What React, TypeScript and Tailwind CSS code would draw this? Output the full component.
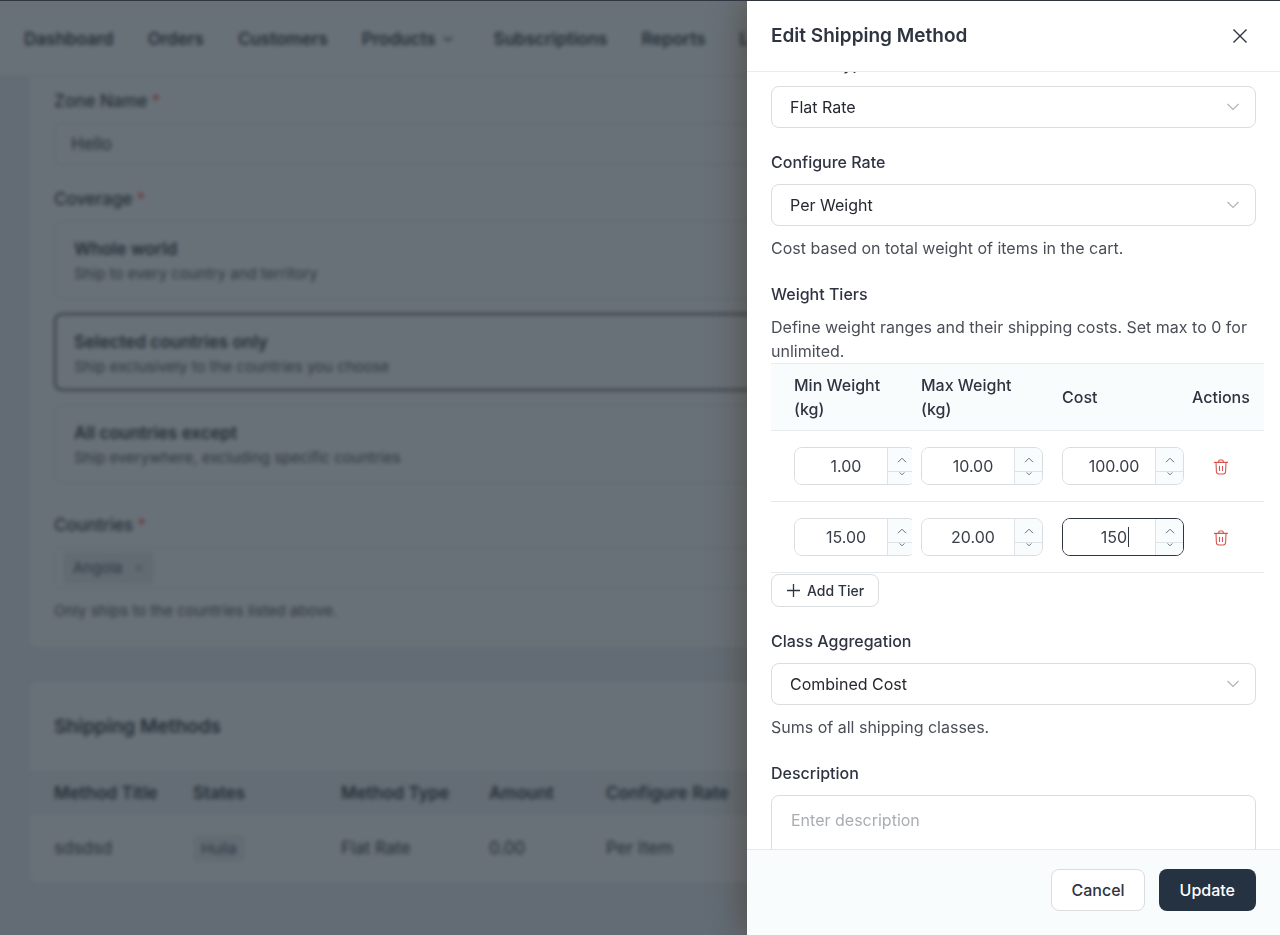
import { useEffect, useRef, useState } from 'react';
import { ChevronDown, X } from 'lucide-react';

type Tier = { id: number; min: string; max: string; cost: string };

const NAV = ['Dashboard', 'Orders', 'Customers', 'Products', 'Subscriptions', 'Reports', 'Logs'];

const COVERAGE = [
  { id: 'world', title: 'Whole world', note: 'Ship to every country and territory' },
  { id: 'selected', title: 'Selected countries only', note: 'Ship exclusively to the countries you choose' },
  { id: 'except', title: 'All countries except', note: 'Ship everywhere, excluding specific countries' },
];

const INITIAL_TIERS: Tier[] = [
  { id: 1, min: '1.00', max: '10.00', cost: '100.00' },
  { id: 2, min: '15.00', max: '20.00', cost: '150' },
];

function Required() {
  return <span className="ml-1 text-[#f04438]">*</span>;
}

function TrashIcon() {
  return (
    <svg width="16" height="16" viewBox="0 0 16 16" fill="none" stroke="currentColor" strokeWidth="1.1" strokeLinecap="round" strokeLinejoin="round">
      <path d="M1.5 3.4h13" />
      <path d="M5.7 3.2V2.3Q5.7 1 7 1h2Q10.3 1 10.3 2.3v.9" />
      <path d="M3 3.6l.4 9Q3.5 15 5.9 15h4.2Q12.5 15 12.6 12.6l.4-9" />
      <path d="M6.5 7.3v4.2M9.5 7.3v4.2" />
    </svg>
  );
}

/* Number box with the up / down steps on its right side */
function NumberField({ label, value, focused, onChange }: {
  label: string;
  value: string;
  focused?: boolean;
  onChange: (v: string) => void;
}) {
  const step = (by: number) => onChange((Number(value) + by).toFixed(2));

  return (
    <div className={`relative flex h-[38px] w-[122px] overflow-hidden rounded-lg border ${focused ? 'border-[#2f3441]' : 'border-[#d9dde0]'}`}>
      <input
        aria-label={label}
        value={value}
        onChange={e => onChange(e.target.value)}
        className="min-w-0 flex-1 bg-white pl-[10px] text-center text-base text-[#3a3e48] caret-transparent outline-none"
      />
      {focused && <span className="absolute top-2 left-[65px] h-5 w-px bg-[#2f3441]" />}
      <div className="flex w-7 flex-col border-l border-[#dfe3e6] bg-[#f8fcfd] text-[#6b7280]">
        <button type="button" aria-label={`Increase ${label}`} onClick={() => step(1)}
                className="flex h-6 items-center justify-center border-b border-[#dfe3e6]">
          <svg width="10" height="6" viewBox="0 0 10 6" fill="none" stroke="currentColor"><path d="M1 5.2 5 1.2l4 4" /></svg>
        </button>
        <button type="button" aria-label={`Decrease ${label}`} onClick={() => step(-1)}
                className="flex flex-1 items-start justify-center">
          <svg width="6" height="4" viewBox="0 0 6 4" fill="none" stroke="currentColor"><path d="M.6.4 3 2.8 5.4.4" /></svg>
        </button>
      </div>
    </div>
  );
}

function SelectField({ id, label, options, help }: { id: string; label: string; options: string[]; help?: string }) {
  return (
    <div>
      <label htmlFor={id} className="block font-medium">{label}</label>
      <div className="relative mt-[10px]">
        <select id={id} className="h-[42px] w-full appearance-none rounded-lg border border-[#d9dde0] bg-white px-[18px] text-base text-[#25282f]">
          {options.map(o => <option key={o}>{o}</option>)}
        </select>
        <svg className="pointer-events-none absolute top-[17px] right-4 text-[#b0b4b9]" width="14" height="8" viewBox="0 0 14 8" fill="none" stroke="currentColor" strokeWidth="1.2">
          <path d="M1.5 1 7 6.5 12.5 1" />
        </svg>
      </div>
      {help && <p className="mt-[10px] text-[#4a4e57]">{help}</p>}
    </div>
  );
}

/* Zone settings page that stays behind the drawer */
function ZonePage() {
  return (
    <div className="min-h-full bg-[#eaeef0] text-[17px] leading-6 text-[#131b26]">
      <nav className="flex h-[76px] items-center gap-[34px] border-b border-[#d9dde0] bg-white px-6 font-semibold">
        {NAV.map(item => (
          <a key={item} href="#" className="flex items-center gap-1 whitespace-nowrap">
            {item}
            {item === 'Products' && <ChevronDown size={16} className="mr-1" />}
          </a>
        ))}
      </nav>

      <main className="flex flex-col gap-[35px] px-[30px]">
        <section className="rounded-b-lg bg-white px-6 pt-3 pb-6">
          <label htmlFor="zone" className="block font-medium">Zone Name<Required /></label>
          <input id="zone" defaultValue="Hello" className="mt-[10px] h-[42px] w-full rounded-lg border border-[#ccd1d5] px-4" />

          <fieldset className="mt-[22px]">
            <legend className="font-medium">Coverage<Required /></legend>
            <div className="mt-[10px] flex flex-col gap-[14px]">
              {COVERAGE.map(c => (
                <label key={c.id}
                       className={`block h-[78px] rounded-lg pt-[14px] ${c.id === 'selected' ? 'border-2 border-[#3e423c] px-[18px]' : 'border border-[#d3d8db] px-[19px]'}`}>
                  <input type="radio" name="coverage" defaultChecked={c.id === 'selected'} className="sr-only" />
                  <span className="block leading-[26px] font-semibold">{c.title}</span>
                  <span className="block text-[15px] leading-6 text-[#363b45]">{c.note}</span>
                </label>
              ))}
            </div>
          </fieldset>

          <div className="mt-[30px] font-medium">Countries<Required /></div>
          <div className="mt-[10px] flex h-[42px] items-center rounded-lg border border-[#d3d8db] px-2">
            <span className="flex h-8 items-center gap-3 rounded bg-[#e6eaec] px-[10px] text-[15px] text-[#363b45]">
              Angola
              <button type="button" aria-label="Remove Angola"><X size={10} /></button>
            </span>
          </div>
          <p className="mt-[10px] text-[15px] leading-6 text-[#363b45]">Only ships to the countries listed above.</p>
        </section>

        <section className="overflow-hidden rounded-lg bg-white">
          <h2 className="px-6 py-[30px] text-[19px] leading-[29px] font-semibold">Shipping Methods</h2>
          <table className="w-full table-fixed text-left">
            <thead className="border-y border-[#dfe3e6] bg-[#eef1f3]">
              <tr className="h-[43px] [&>th]:font-semibold">
                <th className="w-[163px] pl-6">Method Title</th>
                <th className="w-[148px]">States</th>
                <th className="w-[148px]">Method Type</th>
                <th className="w-[117px]">Amount</th>
                <th>Configure Rate</th>
              </tr>
            </thead>
            <tbody>
              <tr className="h-[67px]">
                <td className="pl-6">sdsdsd</td>
                <td><span className="rounded bg-[#e9ecee] px-2 py-1 text-[15px] text-[#363b45]">Huíla</span></td>
                <td>Flat Rate</td>
                <td>0.00</td>
                <td>Per Item</td>
              </tr>
            </tbody>
          </table>
        </section>
      </main>
    </div>
  );
}

export default function App() {
  const [tiers, setTiers] = useState<Tier[]>(INITIAL_TIERS);
  const bodyRef = useRef<HTMLDivElement>(null);

  // Form opens scrolled down to the rate settings
  useEffect(() => {
    if (bodyRef.current) bodyRef.current.scrollTop = 44;
  }, []);

  const update = (id: number, key: keyof Tier, value: string) =>
    setTiers(list => list.map(t => (t.id === id ? { ...t, [key]: value } : t)));

  const addTier = () =>
    setTiers(list => [...list, { id: Date.now(), min: '0.00', max: '0.00', cost: '0.00' }]);

  return (
    <div className="relative h-screen overflow-hidden border-t border-[#2f3440] font-['Inter',sans-serif] text-base">
      <ZonePage />

      <div className="absolute inset-0 bg-[#29343f]/70 backdrop-blur-[2px]" />

      <aside role="dialog" aria-label="Edit Shipping Method"
             className="absolute inset-y-0 right-0 flex w-full max-w-[533px] flex-col bg-white text-[#2f3441] shadow-[-4px_0_32px_rgba(50,30,10,0.4)]">
        <header className="flex h-[71px] shrink-0 items-center justify-between border-b border-[#eaecee] px-6">
          <h2 className="text-[19px] font-semibold">Edit Shipping Method</h2>
          <button type="button" aria-label="Close" className="mr-1 p-1">
            <svg width="16" height="16" viewBox="0 0 16 16" fill="none" stroke="currentColor" strokeWidth="1.4"><path d="M1.5 1.5l13 13M14.5 1.5l-13 13" /></svg>
          </button>
        </header>

        <div ref={bodyRef} className="flex flex-1 flex-col gap-[22px] overflow-y-auto px-6 py-6 [scrollbar-width:none]">
          <SelectField id="type" label="Method Type" options={['Flat Rate', 'Free Shipping', 'Local Pickup']} />
          <SelectField id="rate" label="Configure Rate" options={['Per Weight', 'Per Item', 'Per Order']}
                       help="Cost based on total weight of items in the cart." />

          <div className="-mr-2">
            <h3 className="font-medium">Weight Tiers</h3>
            <p className="mt-[9px] text-[#4a4e57]">
              Define weight ranges and their shipping costs. Set max to 0 for unlimited.
            </p>
            <table className="w-full table-fixed text-left">
              <thead className="border-y border-[#e6edef] bg-[#f8fcfd]">
                <tr className="[&>th]:py-[9px] [&>th]:font-medium">
                  <th className="w-[141px] pr-6 pl-[23px]">Min Weight (kg)</th>
                  <th className="w-[141px] pr-6 pl-[9px]">Max Weight (kg)</th>
                  <th className="w-[139px] pl-[9px]">Cost</th>
                  <th className="whitespace-nowrap">Actions</th>
                </tr>
              </thead>
              <tbody>
                {tiers.map(t => (
                  <tr key={t.id} className="border-b border-[#e6e9eb] [&>td]:py-4">
                    <td className="overflow-hidden pl-[23px]">
                      <NumberField label="Min weight" value={t.min} onChange={v => update(t.id, 'min', v)} />
                    </td>
                    <td className="pl-[9px]">
                      <NumberField label="Max weight" value={t.max} onChange={v => update(t.id, 'max', v)} />
                    </td>
                    <td className="pl-[9px]">
                      <NumberField label="Cost" value={t.cost} focused={t.id === 2} onChange={v => update(t.id, 'cost', v)} />
                    </td>
                    <td>
                      <button type="button" aria-label="Delete tier" className="block px-[21px] pt-[2px] text-[#d9534a]"
                              onClick={() => setTiers(list => list.filter(x => x.id !== t.id))}>
                        <TrashIcon />
                      </button>
                    </td>
                  </tr>
                ))}
              </tbody>
            </table>
            <button type="button" onClick={addTier}
                    className="mt-px flex h-[33px] items-center gap-[6px] rounded-lg border border-[#d9dde0] bg-white px-[14px] text-sm font-medium">
              <svg width="15" height="15" viewBox="0 0 15 15" fill="none" stroke="currentColor" strokeWidth="1.3"><path d="M7.5 1v13M1 7.5h13" /></svg>
              Add Tier
            </button>
          </div>

          <SelectField id="aggregation" label="Class Aggregation" options={['Combined Cost', 'Highest Cost']}
                       help="Sums of all shipping classes." />

          <div>
            <label htmlFor="description" className="block font-medium">Description</label>
            <textarea id="description" rows={4} placeholder="Enter description"
                      className="mt-[10px] block w-full rounded-lg border border-[#d9dde0] px-[19px] py-3 placeholder:text-[#a9adb3]" />
          </div>
        </div>

        <footer className="flex shrink-0 justify-end gap-[14px] border-t border-[#e6e9eb] bg-[#f8fcfd] px-6 pt-[19px] pb-6">
          <button type="button" className="h-[42px] rounded-lg border border-[#d9dde0] bg-white px-[19px] font-medium">Cancel</button>
          <button type="button" className="h-[42px] rounded-lg bg-[#253241] px-[21px] font-medium text-white">Update</button>
        </footer>
      </aside>
    </div>
  );
}
